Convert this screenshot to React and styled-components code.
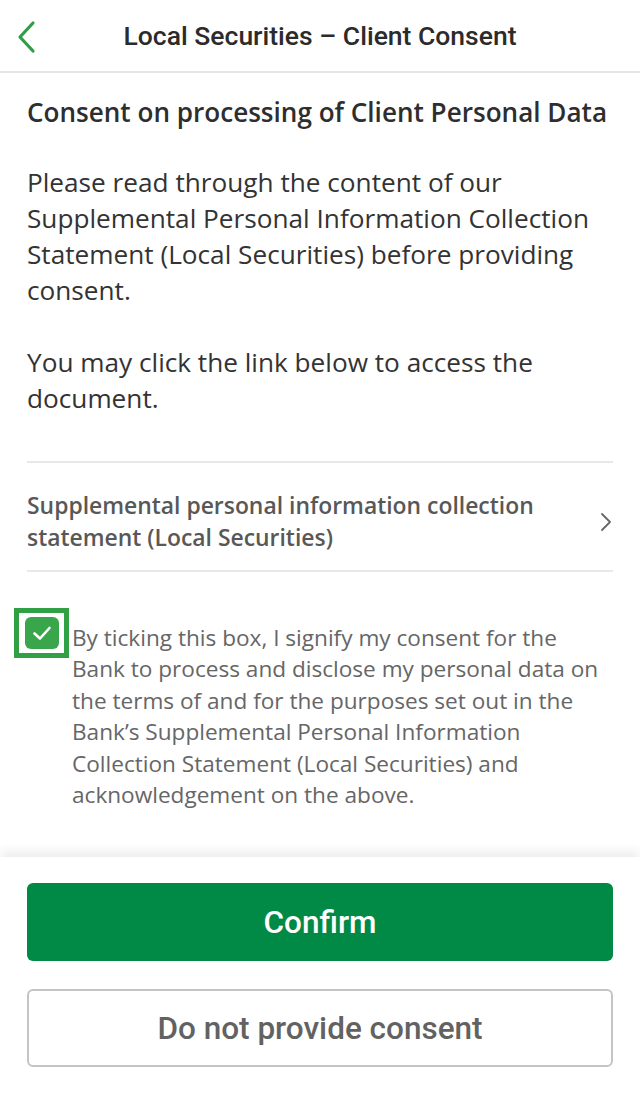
import styled, { createGlobalStyle } from 'styled-components'
import { useState } from 'react'

const GlobalStyle = createGlobalStyle`
  body {
    margin: 0;
    background: #ffffff;
    font-family: 'Open Sans', 'Liberation Sans', sans-serif;
  }
`

const Screen = styled.div`
  width: 640px;
  height: 1100px;
  display: flex;
  flex-direction: column;
  background: #ffffff;
  overflow: hidden;
`

const Header = styled.header`
  height: 71px;
  flex-shrink: 0;
  display: flex;
  align-items: center;
  justify-content: center;
  position: relative;
  border-bottom: 2px solid #e6e6e6;
`

const BackButton = styled.button`
  position: absolute;
  left: 10px;
  top: 19px;
  width: 32px;
  height: 36px;
  border: none;
  background: none;
  padding: 0;
  display: flex;
  align-items: center;
  justify-content: center;
`

const Title = styled.h1`
  margin: 0;
  font-family: Roboto, 'Liberation Sans', sans-serif;
  font-weight: 500;
  font-size: 26.5px;
  color: #2b2b2b;
`

const Content = styled.main`
  flex: 1;
  padding: 0 27px;
`

const Heading = styled.h2`
  margin: 23px 0 0;
  font-size: 26.1px;
  line-height: 32px;
  font-weight: 600;
  color: #2e2e2e;
  white-space: nowrap;
`

const Paragraph = styled.p`
  margin: 36px 0 0;
  font-size: 26.2px;
  line-height: 36px;
  color: #333333;
`

const Divider = styled.hr`
  margin: 0;
  margin-top: ${(p) => p.$top || '0'};
  border: none;
  border-top: 2px solid #e8e8e8;
`

const LinkRow = styled.a`
  display: flex;
  align-items: center;
  justify-content: space-between;
  padding: 27px 0 16px;
  text-decoration: none;
`

const LinkText = styled.span`
  font-size: 22.9px;
  line-height: 32px;
  font-weight: 600;
  color: #585858;
`

const ConsentRow = styled.label`
  display: flex;
  align-items: flex-start;
  margin: 41px 0 0 -13px;
`

const CheckFrame = styled.span`
  flex-shrink: 0;
  box-sizing: border-box;
  width: 55px;
  height: 50px;
  margin-top: -5px;
  border: 5px solid #2fa144;
  display: flex;
  align-items: center;
  justify-content: center;
`

const CheckBox = styled.span`
  box-sizing: border-box;
  width: 34px;
  height: 32px;
  border-radius: 6px;
  background: ${(p) => (p.$checked ? '#3aa64c' : '#ffffff')};
  border: ${(p) => (p.$checked ? 'none' : '2px solid #999')};
  display: flex;
  align-items: center;
  justify-content: center;
`

const ConsentText = styled.span`
  margin: 9px 0 0 3px;
  max-width: 537px;
  font-size: 22.6px;
  line-height: 31.4px;
  color: #666666;
`

const Footer = styled.footer`
  flex-shrink: 0;
  padding: 26px 27px 33px;
  display: flex;
  flex-direction: column;
  gap: 28px;
  background: #ffffff;
  box-shadow: 0 -6px 10px rgba(0, 0, 0, 0.07);
`

const Button = styled.button`
  height: 78px;
  border-radius: 6px;
  font-family: Roboto, 'Liberation Sans', sans-serif;
  font-weight: 500;
  font-size: 31.5px;
  cursor: pointer;
  color: ${(p) => (p.$primary ? '#ffffff' : '#626262')};
  background: ${(p) => (p.$primary ? '#008a45' : '#ffffff')};
  border: ${(p) => (p.$primary ? 'none' : '2px solid #c4c4c4')};
`

function App() {
  const [checked, setChecked] = useState(true)

  return (
    <Screen>
      <GlobalStyle />
      <Header>
        <BackButton aria-label="Back">
          <svg width="22" height="34" viewBox="0 0 22 34">
            <path d="M18 3 L5 17 L18 31" fill="none" stroke="#2f9e46" strokeWidth="3.2" strokeLinecap="round" strokeLinejoin="round" />
          </svg>
        </BackButton>
        <Title>Local Securities – Client Consent</Title>
      </Header>
      <Content>
        <Heading>Consent on processing of Client Personal Data</Heading>
        <Paragraph>
          Please read through the content of our Supplemental Personal Information Collection Statement (Local
          Securities) before providing consent.
        </Paragraph>
        <Paragraph>You may click the link below to access the document.</Paragraph>
        <Divider $top="45px" />
        <LinkRow href="#">
          <LinkText>
            Supplemental personal information collection
            <br />
            statement (Local Securities)
          </LinkText>
          <svg width="14" height="22" viewBox="0 0 14 22">
            <path d="M3 3 L11 11 L3 19" fill="none" stroke="#666" strokeWidth="1.8" strokeLinecap="round" strokeLinejoin="round" />
          </svg>
        </LinkRow>
        <Divider />
        <ConsentRow onClick={() => setChecked(!checked)}>
          <CheckFrame>
            <CheckBox $checked={checked}>
              {checked && (
                <svg width="22" height="18" viewBox="0 0 22 18">
                  <path d="M3.5 9.5 L9 14.5 L18.5 4" fill="none" stroke="#ffffff" strokeWidth="2.6" strokeLinecap="round" strokeLinejoin="round" />
                </svg>
              )}
            </CheckBox>
          </CheckFrame>
          <ConsentText>
            By ticking this box, I signify my consent for the Bank to process and disclose my personal data on the
            terms of and for the purposes set out in the Bank’s Supplemental Personal Information Collection Statement
            (Local Securities) and acknowledgement on the above.
          </ConsentText>
        </ConsentRow>
      </Content>
      <Footer>
        <Button $primary>Confirm</Button>
        <Button>Do not provide consent</Button>
      </Footer>
    </Screen>
  )
}

export default App
